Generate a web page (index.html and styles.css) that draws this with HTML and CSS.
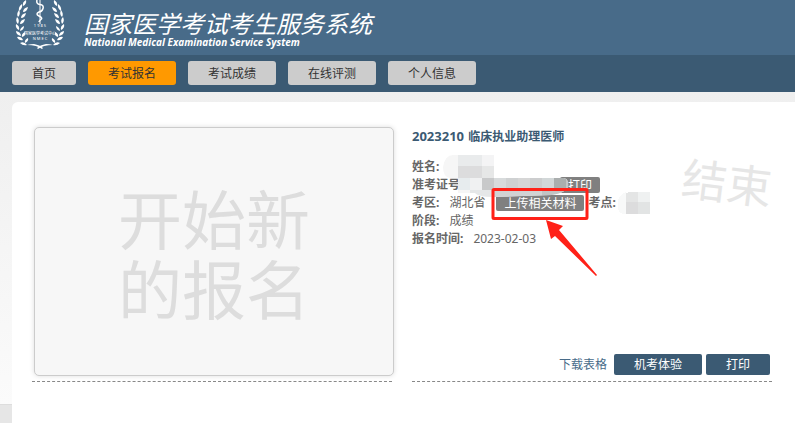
FILE: index.html
```
<!DOCTYPE html>
<html lang="zh-CN">
<head>
    <meta charset="UTF-8">
    <meta name="viewport" content="width=device-width, initial-scale=1.0">
    <title>国家医学考试考生服务系统</title>
    <link rel="stylesheet" href="styles.css">
</head>
<body>
    <header class="header">
        <svg class="logo" viewBox="10 0 64 55" aria-hidden="true">
            <defs>
                <g id="branch" fill="#fff">
                    <path d="M26 0q-4 2-3 6q4-2 3-6z"/>
                    <path d="M22 4q-4 3-3 7q4-3 3-7z"/>
                    <path d="M28 7q-5 1-5 5q4 0 5-5z"/>
                    <path d="M19 10q-3 4-1 7q3-3 1-7z"/>
                    <path d="M26 13q-5 1-5 5q4 0 5-5z"/>
                    <path d="M17 17q-2 4 1 7q2-4-1-7z"/>
                    <path d="M25 19q-5 1-5 5q4 0 5-5z"/>
                    <path d="M16 24q-1 4 3 6q1-4-3-6z"/>
                    <path d="M24 26q-4 2-4 5q4-1 4-5z"/>
                    <path d="M16 31q0 4 5 5q0-4-5-5z"/>
                    <path d="M25 32q-4 2-3 5q4-1 3-5z"/>
                    <path d="M17 37q2 4 6 3q-2-4-6-3z"/>
                    <path d="M28 38q-4 2-3 5q4-2 3-5z"/>
                    <path d="M20 43q3 3 7 2q-3-4-7-2z"/>
                    <path d="M27 45q4-1 7-1q6 1 9 4l-1 1q-5-4-15-4z"/>
                </g>
            </defs>
            <use href="#branch"/>
            <use href="#branch" transform="matrix(-1 0 0 1 80 0)"/>
            <path d="M40 0v24" stroke="#fff" stroke-width="1" fill="none"/>
            <path d="M37 0q-1 4 3 4.500t3 4t-4 3.500q-4 2 0 4t2 3.500t-2 2.500" stroke="#fff" stroke-width="1.500" fill="none"/>
            <text x="40" y="27" class="logo-year">1 9 8 5</text>
            <text x="40" y="35" class="logo-text">国家医学考试中心</text>
            <text x="40" y="40" class="logo-year">N M E C</text>
        </svg>
        <div class="brand">
            <h1>国家医学考试考生服务系统</h1>
            <p>National Medical Examination Service System</p>
        </div>
    </header>

    <nav class="nav">
        <a href="#">首页</a>
        <a href="#" class="active">考试报名</a>
        <a href="#">考试成绩</a>
        <a href="#">在线评测</a>
        <a href="#">个人信息</a>
    </nav>

    <main class="panel">
        <section class="card">
            <button type="button" class="new-apply">开始新<br>的报名</button>
        </section>

        <section class="card exam">
            <h2><span class="code">2023210</span> 临床执业助理医师</h2>
            <div class="info">
                <p><b>姓名:</b></p>
                <p class="ticket"><b>准考证号</b> <button type="button" class="tag">打印</button></p>
                <p><b>考区:</b><span class="value">湖北省</span><button type="button" class="tag upload">上传相关材料</button><b>考点:</b></p>
                <p><b>阶段:</b><span class="value">成绩</span></p>
                <p><b>报名时间:</b><span class="value">2023-02-03</span></p>

                <!-- masked values and the highlight arrow -->
                <svg class="marks" width="250" height="130" viewBox="412 150 250 130" aria-hidden="true">
                    <clipPath id="mask-name"><path d="M453 154H494V177H564Q569 178 568 186Q565 192 552 194L494 196Q478 196 475 192H458V177H450Q443 176 443 166Q445 154 453 154z"/></clipPath>
                    <g clip-path="url(#mask-name)" shape-rendering="crispEdges">
                        <path fill="#f6f6f6" d="M440 150h130v50H440z"/>
                        <path fill="#e9ebec" d="M458 154h24v11h-24z"/>
                        <path fill="#f4f4f5" d="M482 154h12v11h-12z"/>
                        <path fill="#dcdcdd" d="M458 165h24v12h-24z"/>
                        <path fill="#e6e7e7" d="M482 165h12v12h-12z"/>
                        <path fill="#e7ecee" d="M458 177h12v12h-12z"/>
                        <path fill="#f0f1f2" d="M470 177h12v12h-12z"/>
                        <path fill="#c8c9ca" d="M482 177h12v12h-12z"/>
                        <path fill="#d8dbdc" d="M494 177h12v12h-12z"/>
                        <path fill="#cfd1d2" d="M506 177h12v12h-12z"/>
                        <path fill="#d6d6d6" d="M518 177h12v12h-12z"/>
                        <path fill="#cccdce" d="M530 177h12v12h-12z"/>
                        <path fill="#d2d7d8" d="M542 177h12v12h-12z"/>
                        <path fill="#aaaeae" d="M554 177h12v12h-12z"/>
                        <path fill="#c3c5c5" d="M566 177h4v12h-4z"/>
                        <path fill="#e5e7e8" d="M470 189h24v8h-24z"/>
                        <path fill="#d1d3d4" d="M494 189h48v8h-48z"/>
                        <path fill="#c1c4c4" d="M542 189h28v8h-28z"/>
                    </g>
                    <g shape-rendering="crispEdges">
                        <path fill="#f8f9f9" d="M626 191q-8 3-8 10v5q0 7 8 7z"/>
                        <path fill="#e4e5e5" d="M626 192l4-1h8v10h-12z"/>
                        <path fill="#eff1f1" d="M638 191h12v10h-12z"/>
                        <path fill="#dcdcdd" d="M626 201h12v12h-12z"/>
                        <path fill="#e2e4e4" d="M638 201h12v12h-12z"/>
                    </g>
                    <rect x="493" y="188.500" width="94" height="29" rx="1" fill="none" stroke="#ff2118" stroke-width="3"/>
                    <path fill="#ff2118" d="M546 219L563 225L559 229L597 274L596 275L555 235L551 238z"/>
                </svg>
                <span class="stamp">结束</span>
            </div>
            <div class="actions">
                <a href="#">下载表格</a>
                <button type="button">机考体验</button>
                <button type="button">打印</button>
            </div>
        </section>
    </main>
</body>
</html>
```
FILE: styles.css
```
* {
    box-sizing: border-box;
}
body {
    margin: 0;
    min-height: 100vh;
    font-family: "Noto Sans", "Noto Sans CJK SC", sans-serif;
    font-size: 12px;
    line-height: 18px;
    color: #666;
    background: linear-gradient(#efefef 92px, #fbfbfb 404px, #ddd 404px, #ddd 405px, #e6e6e6 405px);
}
h1, h2, p {
    margin: 0;
}
button {
    font: inherit;
    border: none;
    cursor: pointer;
}
a {
    text-decoration: none;
}
.header {
    display: flex;
    gap: 10px;
    height: 55px;
    padding-left: 10px;
    background: #486b89;
    color: #fff;
}
.logo {
    width: 64px;
    height: 55px;
}
.logo text {
    fill: #fff;
    text-anchor: middle;
}
.logo-year {
    font-size: 4px;
}
.logo-text {
    font-size: 4px;
}
.brand {
    padding-top: 11px;
    font-style: italic;
    white-space: nowrap;
}
.brand h1 {
    font-size: 24px;
    font-weight: normal;
    line-height: 26px;
}
.brand p {
    font-family: "Open Sans", sans-serif;
    font-size: 10px;
    font-weight: bold;
    line-height: 10px;
}
.nav {
    display: flex;
    gap: 12px;
    padding: 6px 12px 7px;
    background: #3b5a73;
}
.nav a {
    padding: 1px 20px 0;
    line-height: 23px;
    border-radius: 3px;
    background: #ccc;
    color: #333;
}
.nav a.active {
    background: #f90;
}
.panel {
    display: flex;
    gap: 20px;
    align-items: flex-start;
    min-height: calc(100vh - 102px);
    margin: 10px 0 0 12px;
    padding: 25px 23px 20px 20px;
    border-radius: 6px 0 0 0;
    background: #fff;
}
.card {
    display: flex;
    flex: 1;
    flex-direction: column;
    height: 255px;
    border-bottom: 1px dashed #888;
}
.new-apply {
    height: 249px;
    margin: 0 -2px 0 2px;
    padding: 6px 0 0;
    border: 1px solid #ccc;
    border-radius: 5px;
    background: #f7f7f7;
    box-shadow: 0 0 5px #ddd;
    color: #ddd;
    font-size: 64px;
    line-height: 70px;
}
.exam h2 {
    margin-bottom: 12px;
    color: #3b5a73;
    font-size: 12px;
    line-height: 18px;
}
.code {
    margin-right: 1px;
    font-size: 13px;
}
.info {
    position: relative;
    flex: 1;
}
.info p {
    display: flex;
    align-items: center;
    height: 18px;
}
.value {
    margin-left: 10px;
}
.tag {
    padding: 1px 8px 0;
    line-height: 15px;
    border-radius: 2px;
    background: #808080;
    color: #fff;
}
.ticket .tag {
    margin-left: 100px;
}
.upload {
    margin: 0 4px 0 11px;
}
.marks {
    position: absolute;
    top: -7px;
    left: 0;
}
.stamp {
    position: absolute;
    top: -2px;
    right: 0;
    color: #e6e6e6;
    font-size: 45px;
    line-height: 54px;
    transform: rotate(7deg);
}
.actions {
    display: flex;
    gap: 4px;
    align-items: center;
    justify-content: flex-end;
    padding: 0 2px 6px 0;
}
.actions a {
    margin-right: 3px;
    color: #486b89;
}
.actions button {
    padding: 0 20px;
    line-height: 21px;
    border-radius: 2px;
    background: #3b5a73;
    color: #fff;
}
```
